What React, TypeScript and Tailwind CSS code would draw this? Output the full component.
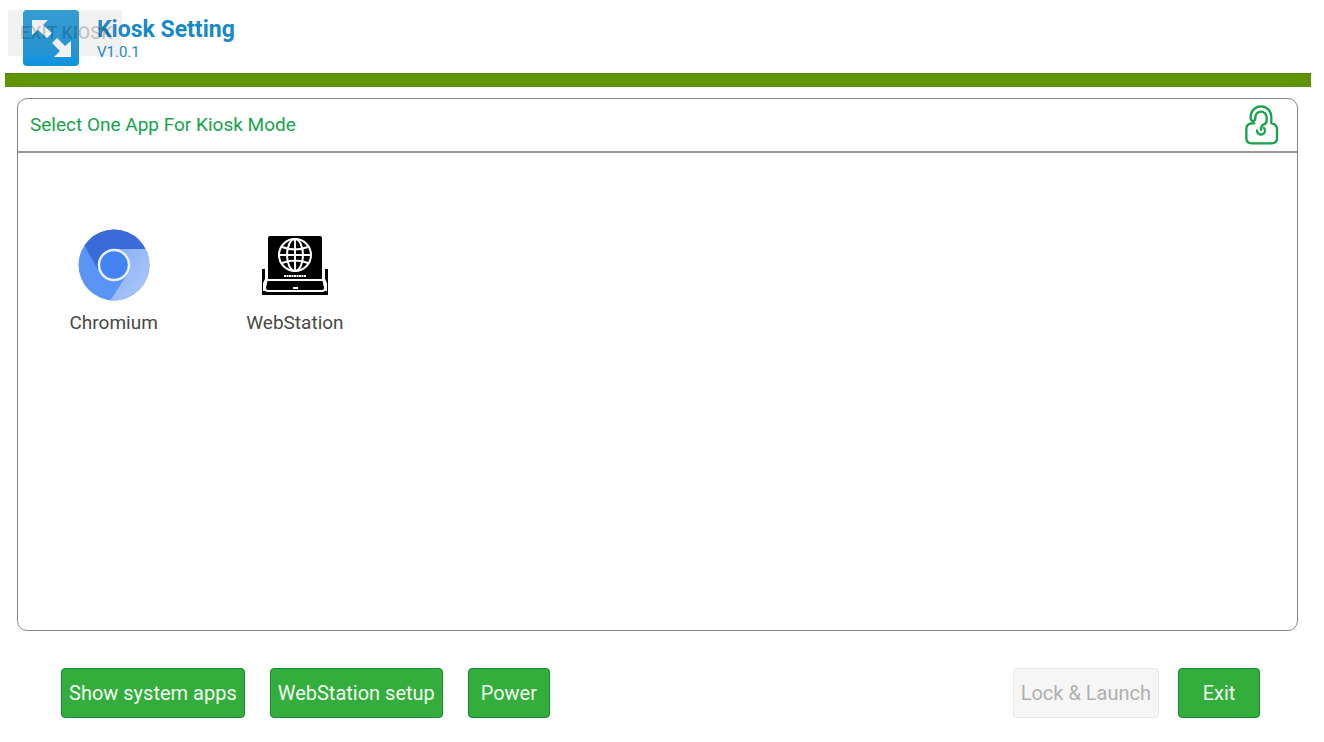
import { ReactNode } from 'react';

interface KioskApp {
  name: string;
  icon: ReactNode;
}

function KioskLogo() {
  return (
    <svg viewBox="0 0 56 56" className="w-14 h-14" aria-hidden="true">
      <defs>
        <linearGradient id="logo" x1="0" y1="0" x2="0" y2="1">
          <stop offset="0" stopColor="#2b9fdc" />
          <stop offset="1" stopColor="#1093dc" />
        </linearGradient>
      </defs>
      <rect width="56" height="56" rx="4" fill="url(#logo)" />
      <g fill="#fff">
        <path d="M9 10H25L20 15L29 23L24 28L15 20L9 25z" />
        <path d="M48 47H31L37 41L29 33L34 28L42 36L48 31z" />
      </g>
    </svg>
  );
}

function UnlockIcon() {
  return (
    <svg
      viewBox="132 132 105 120"
      className="w-[35px] h-10"
      fill="none"
      stroke="#16a34c"
      strokeWidth="7"
      strokeLinecap="round"
      strokeLinejoin="round"
      aria-hidden="true"
    >
      <path d="M163 187H155Q139 188 139 204V231Q139 247 155 247H215Q231 247 231 231V204Q231 190 214 187V167A31 31 0 0 0 152 167V172Q153 180 159 180Q166 179 166 170A17 17 0 0 1 200 168V180Q199 189 190 191Q183 194 183 207" />
      <path d="M171 208A12 12 0 1 0 192 201" />
    </svg>
  );
}

function ChromiumIcon() {
  return (
    <svg viewBox="0 0 72 72" className="w-[72px] h-[72px]" aria-hidden="true">
      <defs>
        <clipPath id="disc">
          <circle cx="36" cy="36" r="35.5" />
        </clipPath>
        <linearGradient id="pale" x1="0" y1="0" x2="1" y2="1">
          <stop offset="0" stopColor="#86aef5" />
          <stop offset="1" stopColor="#aecbfa" />
        </linearGradient>
      </defs>
      <g clipPath="url(#disc)">
        <rect width="72" height="72" fill="#5a95f5" />
        <path d="M36 20H72V72H32L50 44z" fill="url(#pale)" />
        <path d="M0 0H72V20H36L22 44L6 16z" fill="#3a6bd8" />
      </g>
      <circle cx="36" cy="36" r="15" fill="#4384f2" stroke="#e8f0ff" strokeWidth="2.5" />
    </svg>
  );
}

function WebStationIcon() {
  return (
    <svg viewBox="0 0 68 60" className="w-[68px] h-[60px]" fill="none" aria-hidden="true">
      <path d="M7 3Q7 1 9 1H59Q61 1 61 3V45H7z" fill="#000" />
      <path d="M1 34H5V42L2 48V56H66V48L63 42V34H67V60H1z" fill="#000" />
      <path d="M7 44H61L64 56H4z" fill="#000" />
      <g stroke="#fff" strokeWidth="2">
        <circle cx="34" cy="20" r="16" />
        <ellipse cx="34" cy="20" rx="8" ry="16" />
        <path d="M34 4V36M18 20H50M21 12Q34 17 47 12M21 28Q34 23 47 28" />
        <path d="M23 41H45" strokeDasharray="2 0.5" />
        <path d="M5 34V43L4 53Q4 56 7 56H61Q64 56 64 53L63 43V34M6 45H62" />
      </g>
      <path d="M32 52H37V54H32z" fill="#fff" />
    </svg>
  );
}

const apps: KioskApp[] = [
  { name: 'Chromium', icon: <ChromiumIcon /> },
  { name: 'WebStation', icon: <WebStationIcon /> },
];

function ActionButton({ children, disabled }: { children: ReactNode; disabled?: boolean }) {
  return (
    <button
      disabled={disabled}
      className={`h-[50px] min-w-[82px] px-[7px] rounded border text-xl whitespace-nowrap ${
        disabled
          ? 'bg-[#f6f6f6] border-[#e9e9e9] text-[#b0b0b0]'
          : 'bg-[#33ad3b] border-[#158a36] text-[#f4fff4]'
      }`}
    >
      {children}
    </button>
  );
}

export default function App() {
  return (
    <div className="min-h-screen bg-white font-[Roboto,sans-serif] flex flex-col">
      <header className="relative flex items-start pt-[10px] pl-[23px] h-[73px]">
        <KioskLogo />
        <div className="pl-[18px] pt-2 text-[#1788ca]">
          <h1 className="text-[23px] leading-6 font-bold">Kiosk Setting</h1>
          <p className="text-[15px] leading-5">V1.0.1</p>
        </div>
        {/* translucent escape button floating above the title */}
        <button className="absolute left-2 top-[10px] w-[114px] h-[46px] pl-3 text-left text-lg font-medium whitespace-nowrap bg-[#888]/12 text-black/20">
          EXIT KIOSK
        </button>
      </header>
      <div className="h-[14px] ml-[5px] mr-[13px] bg-[#5f9400] border-t border-[#558000]" />

      <main className="grow flex flex-col mt-[11px] ml-[17px] mr-[26px] border border-[#858585] rounded-[10px]">
        <div className="flex items-center justify-between h-[54px] pl-3 pr-[18px] border-b-2 border-[#999]">
          <h2 className="text-[19px] text-[#16a34c]">Select One App For Kiosk Mode</h2>
          <button aria-label="Unlock">
            <UnlockIcon />
          </button>
        </div>
        <div className="grid grid-cols-7 px-[5px] pt-[76px]">
          {apps.map(app => (
            <button key={app.name} className="flex flex-col items-center">
              <span className="h-[72px] flex items-center">{app.icon}</span>
              <span className="mt-2 text-[19px] leading-7 text-[#484848]">{app.name}</span>
            </button>
          ))}
        </div>
      </main>

      <footer className="flex items-center justify-between pt-[37px] pb-6 pl-[61px] pr-16">
        <div className="flex gap-[25px]">
          <ActionButton>Show system apps</ActionButton>
          <ActionButton>WebStation setup</ActionButton>
          <ActionButton>Power</ActionButton>
        </div>
        <div className="flex gap-[19px]">
          <ActionButton disabled>Lock &amp; Launch</ActionButton>
          <ActionButton>Exit</ActionButton>
        </div>
      </footer>
    </div>
  );
}
